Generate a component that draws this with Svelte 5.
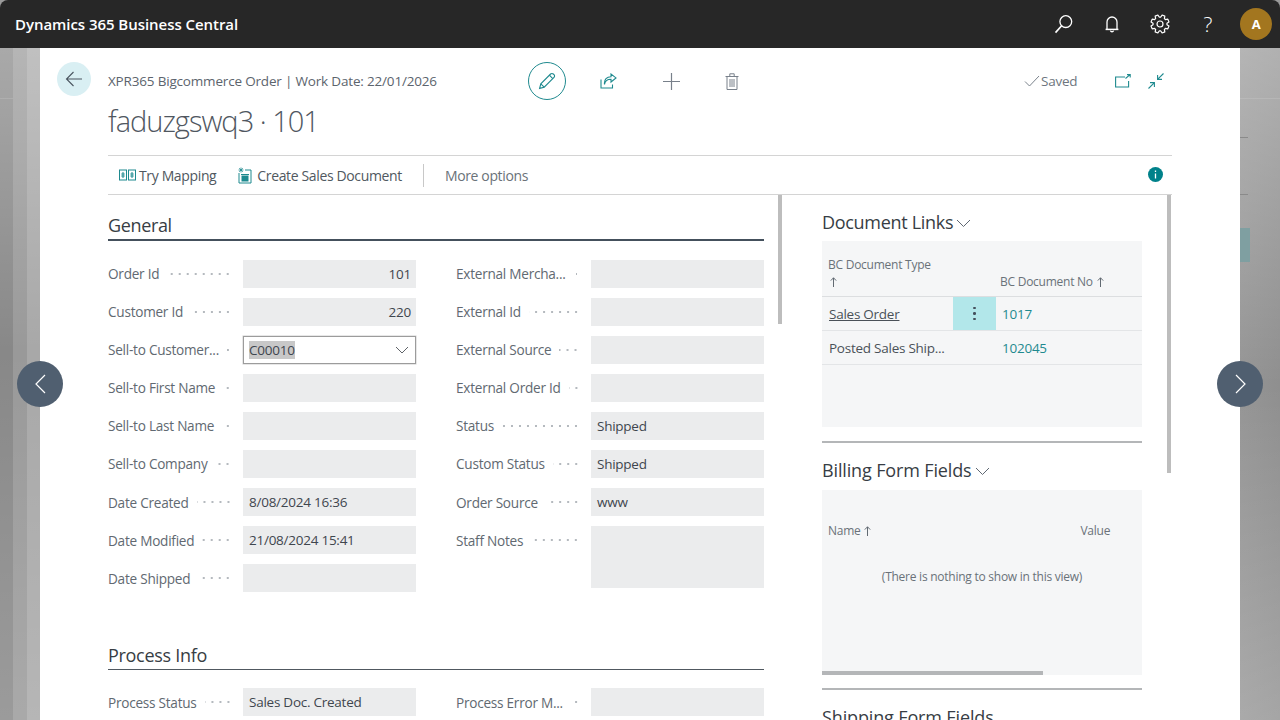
<script>
  const left = [
    { label: 'Order Id', value: '101', num: true },
    { label: 'Customer Id', value: '220', num: true },
    { label: 'Sell-to Customer...', value: 'C00010', select: true },
    { label: 'Sell-to First Name', value: '' },
    { label: 'Sell-to Last Name', value: '' },
    { label: 'Sell-to Company', value: '' },
    { label: 'Date Created', value: '8/08/2024 16:36' },
    { label: 'Date Modified', value: '21/08/2024 15:41' },
    { label: 'Date Shipped', value: '' }
  ];
  const right = [
    { label: 'External Mercha...', value: '' },
    { label: 'External Id', value: '' },
    { label: 'External Source', value: '' },
    { label: 'External Order Id', value: '' },
    { label: 'Status', value: 'Shipped' },
    { label: 'Custom Status', value: 'Shipped' },
    { label: 'Order Source', value: 'www' },
    { label: 'Staff Notes', value: '', tall: true }
  ];

  const gearPoints = [];
  for (let i = 0; i < 8; i++) {
    const c = (i * Math.PI) / 4 - Math.PI / 8;
    const pts = [[c - 0.28, 7], [c - 0.16, 9.2], [c + 0.16, 9.2], [c + 0.28, 7]];
    for (const [a, r] of pts) gearPoints.push(`${(10 + r * Math.cos(a)).toFixed(2)},${(10 + r * Math.sin(a)).toFixed(2)}`);
  }
  const gear = gearPoints.join(' ');
</script>

{#snippet field(f)}
  <div class="field">
    <div class="label"><span>{f.label}</span><i class="dots"></i></div>
    {#if f.select}
      <div class="input select"><mark>{f.value}</mark>
        <svg width="14" height="8" viewBox="0 0 14 8"><path d="M1 1l6 6 6-6" fill="none" stroke="#5f6368" stroke-width="1"/></svg>
      </div>
    {:else}
      <div class="input" class:num={f.num} class:tall={f.tall}>{f.value}</div>
    {/if}
  </div>
{/snippet}

{#snippet chevron()}
  <svg class="chev" width="15" height="8" viewBox="0 0 15 8"><path d="M1 1l6.500 6.500L14 1" fill="none" stroke="#5f6873" stroke-width="1"/></svg>
{/snippet}

{#snippet arrow()}
  <svg class="up" width="7" height="10" viewBox="0 0 7 10" fill="none" stroke="#626a72" stroke-width="1"><path d="M3.500 10V.8M.8 3.600L3.500.8l2.700 2.800"/></svg>
{/snippet}

<div class="app">
  <header class="bar">
    <div class="brand">Dynamics 365 Business Central</div>
    <div class="bar-icons">
      <button aria-label="Search"><svg width="20" height="20" viewBox="0 0 20 20" fill="none" stroke="#fff" stroke-width="1.300"><circle cx="11.800" cy="7.600" r="5.900"/><path d="M7.600 11.800L1.500 18.600" stroke-width="1.600"/></svg></button>
      <button aria-label="Notifications"><svg width="20" height="20" viewBox="0 0 20 20" fill="none" stroke="#fff" stroke-width="1.300"><path d="M5 15V8a5 5 0 0 1 10 0v7"/><path d="M3.600 15.400h12.800" stroke-width="1.500"/><path d="M8.400 16.600a1.700 1.700 0 0 0 3.200 0"/></svg></button>
      <button aria-label="Settings"><svg width="20" height="20" viewBox="0 0 20 20" fill="none" stroke="#fff" stroke-width="1.200" stroke-linejoin="round"><circle cx="10" cy="10" r="3"/><polygon points={gear}/></svg></button>
      <button aria-label="Help" class="q">?</button>
      <div class="avatar">A</div>
    </div>
  </header>

  <div class="stage">
    <aside class="gutter gl"><span class="rule"></span></aside>
    <main class="sheet">
      <div class="top">
        <button class="back" aria-label="Back"><svg width="18" height="16" viewBox="0 0 18 16" fill="none" stroke="#4a5560" stroke-width="1.100"><path d="M17 8H1.500M8.500 1L1.500 8l7 7"/></svg></button>
        <div class="titles">
          <div class="caption">XPR365 Bigcommerce Order | Work Date: 22/01/2026</div>
          <h1>faduzgswq3 · 101</h1>
        </div>
        <div class="actions">
          <button class="edit" aria-label="Edit"><svg width="18" height="18" viewBox="0 0 18 18" fill="none" stroke="#1f8a8f" stroke-width="1.100"><path d="M1.600 16.400l1.200-4.600L12.600 2a1.900 1.900 0 0 1 2.700 0l.7.7a1.900 1.900 0 0 1 0 2.700L6.200 15.200z"/><path d="M2.800 11.800l3.400 3.400M11.400 3.200l3.400 3.400"/></svg></button>
          <button class="act a1" aria-label="Share"><svg width="17" height="16" viewBox="0 0 17 16" fill="none" stroke="#1f8a8f" stroke-width="1.100"><path d="M1 6.500V15h11.500v-3.500"/><path d="M4.500 11.500c.4-3.600 3-5.300 6.500-5.300V9L16 4.900 11 1v2.700C7 3.700 3.800 6.400 4.500 11.500z"/></svg></button>
          <button class="act a2" aria-label="New"><svg width="17" height="17" viewBox="0 0 17 17" stroke="#78808a" stroke-width="1.200"><path d="M8.500 0v17M0 8.500h17"/></svg></button>
          <button class="act a3" aria-label="Delete"><svg width="14" height="17" viewBox="0 0 14 17" fill="none" stroke="#78808a" stroke-width="1"><path d="M.5 3.500h13M2 3.500h10v13H2zM4.800 3.300V.8h4.400v2.500M5 6v8M7 6v8M9 6v8"/></svg></button>
        </div>
        <div class="status">
          <svg width="16" height="12" viewBox="0 0 16 12" fill="none" stroke="#7b838c" stroke-width="1"><path d="M1 6.500L5.500 11 15 1"/></svg>
          <span>Saved</span>
          <button class="tool open" aria-label="Open in new window"><svg width="16" height="14" viewBox="0 0 16 14" fill="none" stroke="#1f8a8f" stroke-width="1.100"><path d="M10 3H.6v10h13V7"/><path d="M10.500 4.500L15 .7M12 .6h3.200v3"/></svg></button>
          <button class="tool" aria-label="Collapse"><svg width="16" height="16" viewBox="0 0 16 16" fill="none" stroke="#1f8a8f" stroke-width="1.100"><path d="M15.500.5L9.800 6.200M9.600 2v4.400H14M.5 15.500l5.700-5.700M6.400 14V9.600H2"/></svg></button>
        </div>
      </div>

      <div class="content">
        <nav class="toolbar">
          <span class="cmd first"><svg width="17" height="12" viewBox="0 0 17 12" fill="none" stroke="#1f8a8f" stroke-width="1"><rect x=".5" y="1" width="7" height="10"/><rect x="9.500" y="1" width="7" height="10"/><path d="M4 3v6M2.300 5h3.400M2.300 7h3.400M13 3v6M11.300 5h3.400M11.300 7h3.400"/></svg>Try Mapping</span>
          <span class="cmd second-cmd"><svg width="15" height="17" viewBox="0 0 15 17" fill="none" stroke="#1f8a8f" stroke-width="1"><path d="M2 6v10h12V3H8"/><path d="M4 .5v5M1.500 3h5M2.200 1.200l3.600 3.600M5.800 1.200L2.200 4.800" stroke-width=".8"/><rect x="5" y="9" width="6" height="5" fill="#1f8a8f"/><path d="M4 7.500h8"/></svg>Create Sales Document</span>
          <span class="sep"></span>
          <span class="cmd more">More options</span>
          <svg class="info" width="15" height="15" viewBox="0 0 15 15"><circle cx="7.500" cy="7.500" r="7.500" fill="#00818a"/><path d="M7.500 6.500v5M7.500 3.500v1.400" stroke="#fff" stroke-width="1.300"/></svg>
        </nav>

        <div class="panes">
          <section class="form">
            <h2 class="head strong">General</h2>
            <div class="cols">
              <div>{#each left as f}{@render field(f)}{/each}</div>
              <div>{#each right as f}{@render field(f)}{/each}</div>
            </div>
            <h2 class="head second">Process Info</h2>
            <div class="cols">
              <div>{@render field({ label: 'Process Status', value: 'Sales Doc. Created' })}</div>
              <div>{@render field({ label: 'Process Error M...', value: '' })}</div>
            </div>
          </section>
          <div class="vbar a"></div>
          <section class="facts">
            <h3>Document Links{@render chevron()}</h3>
            <div class="box links">
              <div class="thead">
                <div class="th t1">BC Document Type<br />{@render arrow()}</div>
                <div class="th t2">BC Document No {@render arrow()}</div>
              </div>
              <div class="tr">
                <a class="c1 on" href="#top">Sales Order</a>
                <span class="dotsbtn"><b></b><b></b><b></b></span>
                <a class="c2" href="#top">1017</a>
              </div>
              <div class="tr">
                <span class="c1">Posted Sales Ship...</span>
                <span class="gap"></span>
                <a class="c2" href="#top">102045</a>
              </div>
            </div>
            <hr />
            <h3 class="h-b">Billing Form Fields{@render chevron()}</h3>
            <div class="box empty">
              <div class="ehead"><span>Name {@render arrow()}</span><span class="val">Value</span></div>
              <div class="msg">(There is nothing to show in this view)</div>
              <div class="hscroll"></div>
            </div>
            <hr class="r2" />
            <h3 class="h-s">Shipping Form Fields</h3>
          </section>
          <div class="vbar b"></div>
        </div>
      </div>
    </main>
    <aside class="gutter gr">
      <span class="rule"></span>
      <span class="tick t-a"></span>
      <span class="tick t-b"></span>
      <span class="tile"></span>
    </aside>
  </div>

  <button class="nav prev" aria-label="Previous"><svg width="11" height="20" viewBox="0 0 11 20" fill="none" stroke="#fff" stroke-width="1.200"><path d="M10 1L1 10l9 9"/></svg></button>
  <button class="nav next" aria-label="Next"><svg width="11" height="20" viewBox="0 0 11 20" fill="none" stroke="#fff" stroke-width="1.200"><path d="M1 1l9 9-9 9"/></svg></button>
</div>

<style>
  :global(body) { margin: 0; background: #9a9a9a; }
  .app {
    position: relative; width: 1280px; height: 720px; overflow: hidden;
    font-family: "Open Sans", "Noto Sans", sans-serif; font-size: 13px; letter-spacing: -.25px; color: #505860;
    background: #9a9a9a;
  }
  button { border: 0; background: none; padding: 0; display: flex; align-items: center; justify-content: center; font: inherit; }

  .bar { height: 48px; background: #272727; display: flex; align-items: center; justify-content: space-between; border-radius: 8px 8px 0 0; padding: 0 8px 0 15px; box-sizing: border-box; }
  .brand { color: #fff; font-size: 15px; font-weight: 600; letter-spacing: -.05px; }
  .bar-icons { display: flex; align-items: center; }
  .bar-icons button { width: 48px; height: 48px; }
  .q { color: #fff; font-size: 21px; font-weight: 300; }
  .avatar { width: 32px; height: 32px; border-radius: 50%; background: #a3761f; color: #fff; font-weight: 700; font-size: 13px; display: flex; align-items: center; justify-content: center; margin-left: 8px; }

  .stage { height: 672px; display: flex; }
  .gutter { width: 40px; flex: none; position: relative; }
  .gl { background:
      linear-gradient(to bottom, rgba(255,255,255,.28), rgba(255,255,255,0) 45%, rgba(255,255,255,.16)),
      linear-gradient(to right, #888 0 13px, #999 13px 27px, #a8a8a8 27px 40px); }
  .gr { background:
      linear-gradient(to bottom, rgba(255,255,255,.3), rgba(255,255,255,0) 50%, rgba(255,255,255,.2)),
      linear-gradient(to right, #959595, #8f8f8f); }
  .rule { position: absolute; left: 0; top: 50px; width: 100%; height: 1px; background: rgba(255,255,255,.12); }
  .gl .rule { width: 13px; }
  .tick { position: absolute; left: 0; width: 8px; height: 1px; background: #8a8a8a; }
  .t-a { top: 89px; }
  .t-b { top: 146px; }
  .tile { position: absolute; left: 0; top: 180px; width: 10px; height: 34px; background: #7f9fa1; }

  .sheet { flex: 1; min-width: 0; overflow: hidden; background: #fff; padding: 14px 68px 0 17px; box-sizing: border-box; }

  .top { display: flex; align-items: flex-start; height: 93px; }
  .back { width: 34px; height: 34px; border-radius: 50%; background: #d9eff3; flex: none; }
  .titles { margin-left: 17px; width: 420px; flex: none; }
  .caption { font-size: 13.500px; line-height: 20px; margin-top: 9px; color: #5c646d; letter-spacing: -.18px; }
  h1 { margin: 10px 0 0; font-size: 29px; line-height: 40px; font-weight: 300; color: #50575f; letter-spacing: -1px; white-space: nowrap; }

  .actions { display: flex; align-items: center; height: 38px; }
  .edit { width: 38px; height: 38px; border: 1px solid #1f8a8f; border-radius: 50%; box-sizing: border-box; }
  .act { width: 20px; height: 38px; }
  .a1 { margin-left: 32px; }
  .a2 { margin-left: 43px; }
  .a3 { margin-left: 41px; }
  .status { margin-left: auto; display: flex; align-items: center; height: 38px; width: 148px; font-size: 13.500px; color: #6e767e; }
  .status svg:first-child { margin-right: 1px; }
  .tool { width: 20px; height: 20px; }
  .open { margin-left: 36px; margin-right: 13px; }

  .content { margin-left: 51px; }
  .toolbar { display: flex; align-items: center; height: 40px; border-top: 1px solid #d4d4d4; border-bottom: 1px solid #d4d4d4; box-sizing: border-box; font-size: 14px; letter-spacing: -.36px; color: #505860; }
  .cmd { display: flex; align-items: center; gap: 3px; white-space: nowrap; }
  .first { margin-left: 11px; margin-right: 21px; }
  .second-cmd { gap: 5px; }
  .sep { width: 1px; height: 23px; background: #c8c8c8; margin: 0 21px; }
  .more { color: #6a7279; }
  .info { margin-left: auto; margin-right: 9px; margin-top: -1px; }

  .panes { display: flex; height: 525px; overflow: hidden; }
  .form { width: 656px; flex: none; }
  .vbar { width: 4px; background: #bdbdbd; flex: none; }
  .vbar.a { height: 129px; margin-left: 14px; }
  .vbar.b { height: 278px; margin-left: 25px; }
  .facts { width: 320px; flex: none; margin-left: 40px; }

  .head { margin: 0; font-size: 18px; line-height: 24px; font-weight: 500; color: #373d44; height: 30px; box-sizing: border-box; border-bottom: 1px solid #505860; letter-spacing: -.3px; }
  .strong { margin-top: 18px; height: 28px; border-bottom-width: 2px; border-color: #44505c; letter-spacing: -.35px; }
  .second { margin-top: 37.600px; height: 30px; padding-top: 3px; }
  .cols { display: grid; grid-template-columns: 308px 308px; column-gap: 40px; margin-top: 18.500px; }
  .field { display: flex; align-items: flex-start; height: 28px; margin-bottom: 10.100px; }
  .label { width: 135px; flex: none; display: flex; align-items: center; height: 28px; font-size: 13.600px; color: #616971; padding-right: 11px; box-sizing: border-box; white-space: nowrap; }
  .dots { flex: 1; min-width: 0; height: 6px; margin-left: 8px; background: radial-gradient(circle, #b3b8bd 0 .7px, transparent 1px) right center / 8px 6px repeat-x; }
  .input { width: 173px; height: 28px; flex: none; background: #ebeced; box-sizing: border-box; padding: 0 6px; display: flex; align-items: center; font-size: 13.500px; color: #3f464e; }
  .num { justify-content: flex-end; padding-right: 5px; }
  .tall { height: 62px; }
  .select { background: #fff; border: 1px solid #9c9c9c; padding-left: 5px; justify-content: space-between; padding-right: 6px; box-shadow: 0 0 0 .5px #cfcfcf; }
  mark { background: #c8c8c8; color: #3f464e; }

  h3 { margin: 0; font-size: 18px; line-height: 24px; font-weight: 500; color: #373d44; padding-top: 15px; height: 46px; box-sizing: border-box; letter-spacing: -.3px; white-space: nowrap; }
  .chev { margin-left: 3px; vertical-align: 2px; }
  .up { margin-left: 1px; vertical-align: -1px; }
  .box { background: #f5f6f7; }
  .links { height: 186px; }
  .thead { height: 56px; display: flex; align-items: flex-end; border-bottom: 1px solid #dcdee0; box-sizing: border-box; font-size: 12px; color: #6a7279; }
  .th { padding-bottom: 6px; line-height: 17px; }
  .t1 { width: 178px; padding-left: 6px; box-sizing: border-box; }
  .t1 .up { margin-left: 2px; }
  .tr { height: 34px; display: flex; align-items: stretch; border-bottom: 1px solid #e3e5e7; box-sizing: border-box; font-size: 13.500px; }
  .tr .c1 { width: 131px; flex: none; padding-left: 7px; box-sizing: border-box; display: flex; align-items: center; color: #4a5158; white-space: nowrap; }
  .on { text-decoration: underline; }
  .dotsbtn, .gap { width: 43px; flex: none; }
  .dotsbtn { background: #b2e7ea; display: flex; flex-direction: column; align-items: center; justify-content: center; gap: 3px; }
  .dotsbtn b { width: 2.500px; height: 2.500px; border-radius: 50%; background: #44505c; }
  .tr .c2 { padding-left: 6px; display: flex; align-items: center; color: #1f8a8f; text-decoration: none; }
  hr { margin: 14px 0 0; border: 0; height: 2px; background: #b4b6b8; }
  .r2 { margin-top: 13px; }
  .h-b { height: 47px; padding-top: 15px; letter-spacing: -.14px; }
  .empty { height: 185px; position: relative; font-size: 12px; color: #6a7279; display: flex; flex-direction: column; }
  .ehead { display: flex; padding: 32px 0 0 6px; line-height: 17px; }
  .val { margin-left: 209px; }
  .msg { text-align: center; margin-top: 29px; }
  .hscroll { position: absolute; left: 0; bottom: 0; width: 221px; height: 4px; background: #b4b6b8; }
  .h-s { padding-top: 15px; letter-spacing: -.14px; }

  .nav { position: absolute; top: 361px; width: 46px; height: 46px; border-radius: 50%; background: #505f70; }
  .prev { left: 17px; }
  .next { left: 1217px; }
</style>
